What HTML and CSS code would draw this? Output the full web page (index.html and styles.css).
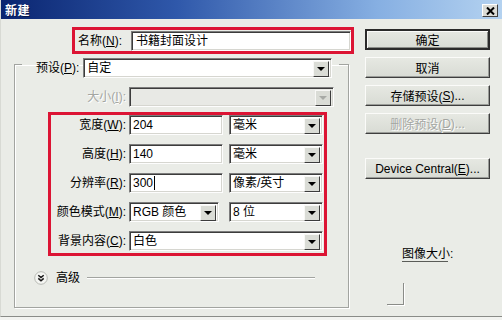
FILE: index.html
```html
<!DOCTYPE html>
<html lang="zh-CN">
<head>
<meta charset="utf-8">
<title>新建</title>
<link rel="stylesheet" href="styles.css">
</head>
<body>
<div class="win">
  <div class="titlebar">
    <span class="title">新建</span>
    <span class="close"><svg width="9" height="8" viewBox="0 0 9 8"><path d="M1 0.5 L8 7.5 M8 0.5 L1 7.5" stroke="#000" stroke-width="2"/></svg></span>
  </div>
  <div class="content">
    <div class="left">
      <div class="namebox">
        <span class="lbl namelbl">名称(<u>N</u>):</span>
        <div class="field namefield"><span class="val">书籍封面设计</span></div>
      </div>
      <fieldset class="group">
        <legend class="legend">
          <span class="lbl presetlbl">预设(<u>P</u>):</span>
          <div class="field select preset"><span class="val">自定</span><i class="arrow"></i></div>
        </legend>
        <div class="row sizerow">
          <span class="lbl dis sizelbl">大小(<u>I</u>):</span>
          <div class="field select disabled sizesel"><i class="arrow"></i></div>
        </div>
        <div class="hlbox">
          <div class="row">
            <span class="lbl rl">宽度(<u>W</u>):</span>
            <div class="field num"><span class="val">204</span></div>
            <div class="field select unit"><span class="val">毫米</span><i class="arrow"></i></div>
          </div>
          <div class="row">
            <span class="lbl rl">高度(<u>H</u>):</span>
            <div class="field num"><span class="val">140</span></div>
            <div class="field select unit"><span class="val">毫米</span><i class="arrow"></i></div>
          </div>
          <div class="row">
            <span class="lbl rl">分辨率(<u>R</u>):</span>
            <div class="field num"><span class="val">300</span><i class="caret"></i></div>
            <div class="field select unit"><span class="val">像素/英寸</span><i class="arrow"></i></div>
          </div>
          <div class="row">
            <span class="lbl rl">颜色模式(<u>M</u>):</span>
            <div class="field select mode"><span class="val">RGB 颜色</span><i class="arrow"></i></div>
            <div class="field select unit bits"><span class="val">8 位</span><i class="arrow"></i></div>
          </div>
          <div class="row">
            <span class="lbl rl">背景内容(<u>C</u>):</span>
            <div class="field select bg"><span class="val">白色</span><i class="arrow"></i></div>
          </div>
        </div>
        <div class="adv">
          <span class="advicon"><svg width="14" height="14" viewBox="0 0 14 14"><circle cx="7" cy="7" r="6.3" fill="#f4f5f2" stroke="#b8bab4" stroke-width="1"/><path d="M4.3 4.2 L7 6.6 L9.7 4.2 M4.3 7.4 L7 9.8 L9.7 7.4" fill="none" stroke="#1a1a1a" stroke-width="1.5"/></svg></span>
          <span class="lbl advlbl">高级</span>
          <span class="advline"></span>
        </div>
      </fieldset>
    </div>
    <div class="right">
      <div class="btn default">确定</div>
      <div class="btn">取消</div>
      <div class="btn">存储预设(<u>S</u>)...</div>
      <div class="btn disabledbtn">删除预设(<u>D</u>)...</div>
      <div class="btn device">Device Central(<u>E</u>)...</div>
      <div class="imgsize">图像大小:</div>
      <div class="bracket"></div>
    </div>
  </div>
</div>
</body>
</html>
```

FILE: styles.css
```css
* { box-sizing: border-box; }
html, body { margin: 0; padding: 0; }
body {
  width: 502px;
  height: 320px;
  background: #f2f3f0;
  font-family: "Liberation Sans", "Noto Sans CJK SC", sans-serif;
  font-size: 12px;
  color: #000;
  overflow: hidden;
}
u { text-decoration: underline; text-underline-offset: 1px; }

.win {
  width: 502px;
  height: 317px;
  background: #eaece7;
  border-bottom: 1px solid #8a8c88;
  border-left: 1px solid #d8dad4;
}

.titlebar {
  height: 19px;
  background: linear-gradient(to right, #0a2570 0%, #2f58aa 35%, #86afe2 75%, #b4d2f0 100%);
  display: flex;
  align-items: center;
  justify-content: space-between;
  padding: 0 4px 0 4px;
}
.title {
  color: #fff;
  font-weight: bold;
  font-size: 12px;
  letter-spacing: 0.5px;
  text-shadow: 1px 1px 0 #06154a;
}
.close {
  width: 16px;
  height: 13px;
  margin-top: 2px;
  background: #dcdcd6;
  border: 1px solid;
  border-color: #fff #404040 #404040 #fff;
  display: flex;
  align-items: center;
  justify-content: center;
}

.content {
  display: flex;
  align-items: flex-start;
}
.left {
  width: 354px;
  flex: none;
}
.right {
  margin-left: 10px;
  padding-top: 10px;
  display: flex;
  flex-direction: column;
  gap: 7px;
}

.lbl { white-space: nowrap; line-height: 14px; }
.dis { color: #a4a6a2; text-shadow: 1px 1px 0 #fff; }

/* name highlight */
.namebox {
  margin: 8px 0 0 71px;
  width: 282px;
  height: 27px;
  border: 3px solid #dc1434;
  display: flex;
  align-items: center;
  padding-left: 3px;
}
.namelbl { width: 50px; margin-right: 3px; }

.field {
  position: relative;
  height: 20px;
  background: #fff;
  border: 1px solid;
  border-color: #7c7c7c #fdfdfd #fdfdfd #7c7c7c;
  box-shadow: inset 1px 1px 0 #3c3c3c, inset -1px -1px 0 #d6d6d0;
  display: flex;
  align-items: center;
  padding-left: 3px;
  flex: none;
}
.val { white-space: nowrap; line-height: 14px; }
.namefield { width: 220px; }
.namefield .val { padding-left: 1px; }

.arrow {
  position: absolute;
  right: 2px;
  top: 2px;
  width: 16px;
  height: 16px;
  background: #dadcd6;
  border: 1px solid;
  border-color: #f8f8f6 #3c3c3c #3c3c3c #f8f8f6;
}
.arrow::after {
  content: "";
  position: absolute;
  left: 3px;
  top: 5px;
  border-left: 4px solid transparent;
  border-right: 4px solid transparent;
  border-top: 4px solid #000;
}
.disabled { background: #e8e9e5; }
.disabled .arrow::after { border-top-color: #a8aaa6; }

/* group box */
.group {
  margin: 4px 0 0 13px;
  width: 335px;
  padding: 0 0 22px 0;
  border: 1px solid #a2a4a0;
  box-shadow: 1px 1px 0 #fff, inset 1px 1px 0 #fff;
}
.legend {
  margin-left: 7px;
  padding: 0 7px 0 14px;
  display: flex;
  align-items: flex-start;
}
.presetlbl { margin-top: 3px; margin-bottom: -5px; }
.preset { width: 249px; margin-left: 4px; margin-bottom: -8px; }

.row {
  display: flex;
  align-items: center;
  height: 20px;
}
.sizerow { margin-top: 17px; }
.sizelbl { width: 111px; text-align: right; margin-right: 3px; }
.sizesel { width: 205px; }

.hlbox {
  margin: 5px 0 0 33px;
  width: 279px;
  border: 3px solid #dc1434;
  padding: 0 0 2px 0;
  display: flex;
  flex-direction: column;
  gap: 9px;
}
.rl { width: 75px; text-align: right; margin-right: 3px; }
.num { width: 94px; }
.unit { width: 94px; margin-left: 6px; }
.mode { width: 90px; }
.bits { margin-left: 10px; }
.bg { width: 194px; }
.caret {
  width: 1px;
  height: 14px;
  background: #000;
  margin-left: 1px;
}

.adv {
  margin: 15px 0 0 19px;
  display: flex;
  align-items: center;
  height: 14px;
}
.advicon { width: 14px; height: 14px; display: block; }
.advicon svg { display: block; }
.advlbl { margin-left: 8px; }
.advline {
  margin-left: 7px;
  width: 228px;
  height: 2px;
  border-top: 1px solid #a2a4a0;
  border-bottom: 1px solid #fff;
}

/* buttons */
.btn {
  width: 125px;
  height: 21px;
  background: linear-gradient(#e6e8e2, #d8dbd4);
  border: 1px solid;
  border-color: #fbfbf9 #3e3e3e #3e3e3e #fbfbf9;
  box-shadow: inset -1px -1px 0 #9a9c98;
  display: flex;
  align-items: center;
  justify-content: center;
  white-space: nowrap;
}
.btn.default {
  border: 2px solid #2a2a2a;
  box-shadow: inset 1px 1px 0 #fbfbf9, inset -1px -1px 0 #8a8c88;
}
.disabledbtn { color: #a4a6a2; text-shadow: 1px 1px 0 #fff; }
.device { margin-top: 17px; }

.imgsize {
  margin: 61px 0 0 37px;
  width: 46px;
  white-space: nowrap;
  line-height: 14px;
  border-bottom: 1px solid #5a5c58;
}
.bracket {
  margin: 14px 0 0 22px;
  width: 17px;
  height: 22px;
  border-right: 1px solid #8a8c88;
  border-bottom: 1px solid #8a8c88;
  box-shadow: 1px 1px 0 #fff;
}
```
